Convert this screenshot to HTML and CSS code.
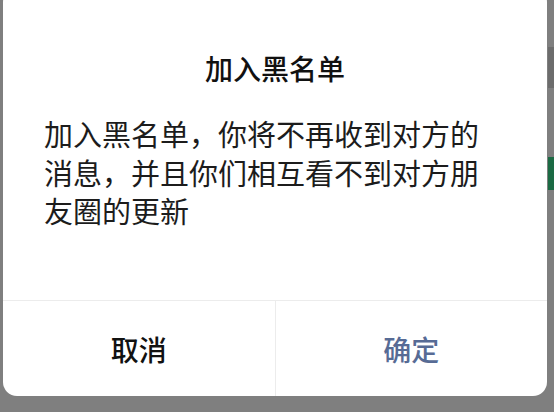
FILE: index.html
```html
<!DOCTYPE html>
<html lang="zh-CN">
<head>
<meta charset="utf-8">
<link rel="stylesheet" href="styles.css">
</head>
<body>
<div class="dialog">
  <div class="dialog-head">
    <div class="title">加入黑名单</div>
    <div class="message">加入黑名单，你将不再收到对方的消息，并且你们相互看不到对方朋友圈的更新</div>
  </div>
  <div class="actions">
    <div class="btn cancel">取消</div>
    <div class="btn confirm">确定</div>
  </div>
</div>
</body>
</html>
```
FILE: styles.css
```css
html, body {
  margin: 0;
  padding: 0;
  width: 554px;
  height: 412px;
  overflow: hidden;
}
body {
  background-color: #7f7f7f;
  background-image:
    linear-gradient(#6c6c6c, #6c6c6c),
    linear-gradient(#1b6a44, #1b6a44);
  background-repeat: no-repeat;
  background-size: 6px 41px, 6px 33px;
  background-position: 548px 47px, 548px 157px;
  font-family: "Noto Sans CJK SC", "Noto Sans", sans-serif;
}
.dialog {
  margin: -12px 0 0 3px;
  width: 544px;
  height: 408px;
  background: #ffffff;
  border-radius: 14px;
  display: flex;
  flex-direction: column;
  overflow: hidden;
}
.dialog-head {
  flex: 1;
  padding: 60px 41px 0 41px;
  border-bottom: 1px solid #ececec;
}
.title {
  font-size: 28px;
  line-height: 40px;
  font-weight: 500;
  color: #111111;
  text-align: center;
}
.message {
  margin-top: 26px;
  font-size: 29px;
  line-height: 38.5px;
  color: #1c1c1c;
}
.actions {
  height: 95px;
  display: flex;
}
.btn {
  flex: 1;
  display: flex;
  align-items: center;
  justify-content: center;
  font-size: 28px;
  font-weight: 500;
}
.cancel {
  color: #111111;
  border-right: 1px solid #ececec;
}
.confirm {
  color: #576b95;
}
```
